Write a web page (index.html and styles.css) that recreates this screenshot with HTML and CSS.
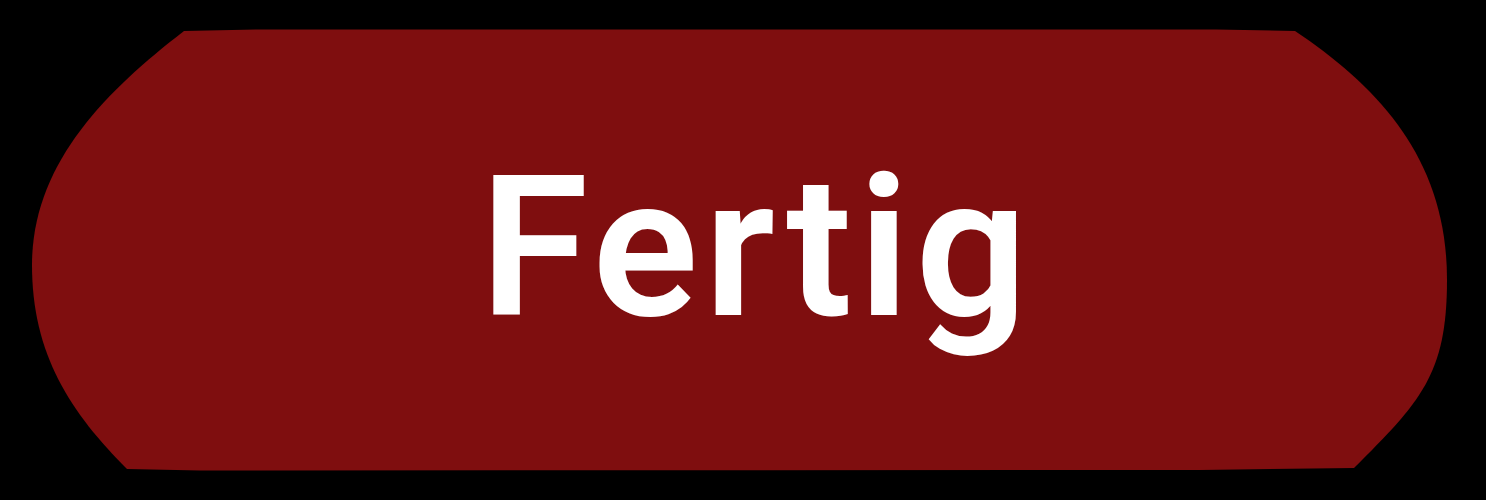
FILE: index.html
```html
<!DOCTYPE html>
<html lang="de">
<head>
<meta charset="utf-8">
<title>Fertig</title>
<link rel="stylesheet" href="styles.css">
</head>
<body>
<div class="button">
  <span class="label">Fertig</span>
</div>
</body>
</html>
```
FILE: styles.css
```css
html, body {
  margin: 0;
  padding: 0;
  background: #000;
}
body {
  width: 1486px;
  height: 500px;
  overflow: hidden;
}
.button {
  width: 1486px;
  height: 500px;
  background: #7f0e0f;
  clip-path: path('M184 31 L260 29.5 L1216 29.5 L1295 31 C1380 88 1447 160 1447 280 C1447 375 1420 402 1354 468 L1200 470 L200 470.5 L127 469 C71 413 32 355 32 265 C32 165 104 92.6 184 31 Z');
  display: flex;
  justify-content: flex-start;
  align-items: flex-start;
  box-sizing: border-box;
  padding: 149px 0 0 480px;
}
.label {
  font-family: Roboto, "Liberation Sans", sans-serif;
  font-weight: 600;
  font-size: 197px;
  line-height: 197px;
  color: #fff;
  letter-spacing: 6px;
}
```
